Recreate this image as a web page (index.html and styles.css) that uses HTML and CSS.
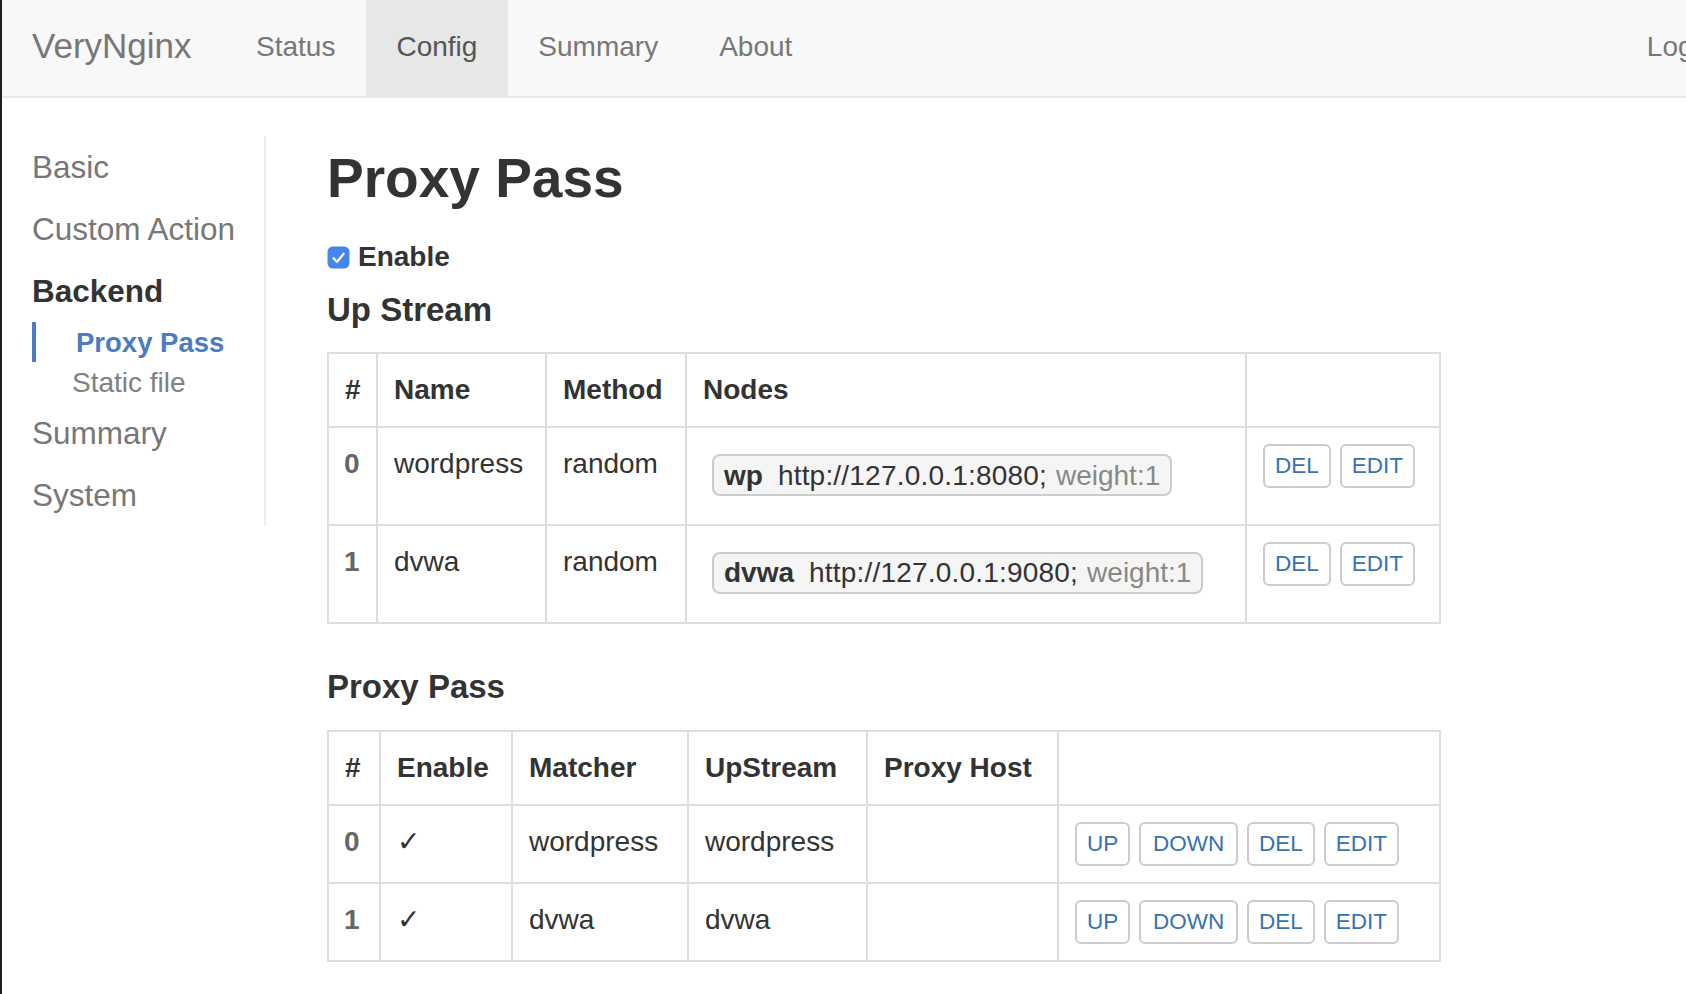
FILE: index.html
```html
<!DOCTYPE html>
<html lang="en">
<head>
<meta charset="utf-8">
<title>VeryNginx - Proxy Pass</title>
<link rel="stylesheet" href="styles.css">
</head>
<body>
<nav class="navbar">
  <a class="brand" href="#">VeryNginx</a>
  <ul class="nav">
    <li><a href="#">Status</a></li>
    <li class="active"><a href="#">Config</a></li>
    <li><a href="#">Summary</a></li>
    <li><a href="#">About</a></li>
  </ul>
  <ul class="nav nav-right">
    <li><a href="#">Logout</a></li>
  </ul>
</nav>
<div class="page">
  <aside class="sidebar">
    <ul class="menu">
      <li class="menu-item">Basic</li>
      <li class="menu-item">Custom Action</li>
      <li class="menu-item current">Backend</li>
      <li>
        <ul class="submenu">
          <li class="sub-item active">Proxy Pass</li>
          <li class="sub-item">Static file</li>
        </ul>
      </li>
      <li class="menu-item">Summary</li>
      <li class="menu-item">System</li>
    </ul>
  </aside>
  <main class="main">
    <h1 class="title">Proxy Pass</h1>
    <label class="enable">
      <span class="checkbox"><svg viewBox="0 0 22 22" width="22" height="22"><rect x="0.5" y="0.5" width="21" height="21" rx="5" fill="#4586ec"/><path d="M6.2 11.6l3.4 3.6L15.9 7.4" fill="none" stroke="#fff" stroke-width="2.1" stroke-linecap="round" stroke-linejoin="round"/></svg></span>
      Enable
    </label>
    <h3 class="section">Up Stream</h3>
    <table class="grid grid-upstream">
      <thead>
        <tr>
          <th class="u1">#</th>
          <th class="u2">Name</th>
          <th class="u3">Method</th>
          <th class="u4">Nodes</th>
          <th class="u5"></th>
        </tr>
      </thead>
      <tbody>
        <tr>
          <th class="num">0</th>
          <td>wordpress</td>
          <td>random</td>
          <td><span class="node"><b class="node-name">wp</b><span class="node-url">http://127.0.0.1:8080;</span><span class="weight">weight:1</span></span></td>
          <td><div class="btns"><span class="btn">DEL</span><span class="btn">EDIT</span></div></td>
        </tr>
        <tr>
          <th class="num">1</th>
          <td>dvwa</td>
          <td>random</td>
          <td><span class="node"><b class="node-name">dvwa</b><span class="node-url">http://127.0.0.1:9080;</span><span class="weight">weight:1</span></span></td>
          <td><div class="btns"><span class="btn">DEL</span><span class="btn">EDIT</span></div></td>
        </tr>
      </tbody>
    </table>
    <h3 class="section section-2">Proxy Pass</h3>
    <table class="grid grid-proxy">
      <thead>
        <tr>
          <th class="p1">#</th>
          <th class="p2">Enable</th>
          <th class="p3">Matcher</th>
          <th class="p4">UpStream</th>
          <th class="p5">Proxy Host</th>
          <th class="p6"></th>
        </tr>
      </thead>
      <tbody>
        <tr>
          <th class="num">0</th>
          <td><span class="tick">&#10003;</span></td>
          <td>wordpress</td>
          <td>wordpress</td>
          <td></td>
          <td><div class="btns"><span class="btn">UP</span><span class="btn btn-wide">DOWN</span><span class="btn">DEL</span><span class="btn">EDIT</span></div></td>
        </tr>
        <tr>
          <th class="num">1</th>
          <td><span class="tick">&#10003;</span></td>
          <td>dvwa</td>
          <td>dvwa</td>
          <td></td>
          <td><div class="btns"><span class="btn">UP</span><span class="btn btn-wide">DOWN</span><span class="btn">DEL</span><span class="btn">EDIT</span></div></td>
        </tr>
      </tbody>
    </table>
  </main>
</div>
</body>
</html>
```

FILE: styles.css
```css
* {
  box-sizing: border-box;
}

html {
  overflow: hidden;
}

body {
  margin: 0;
  height: 100vh;
  overflow: hidden;
  font-family: "Liberation Sans", Arial, Helvetica, sans-serif;
  color: #333;
  background: #fff;
  border-left: 2px solid #1e1e1e;
}

/* ---------- navbar ---------- */
.navbar {
  display: flex;
  height: 98px;
  background: #f8f8f8;
  border-bottom: 2px solid #e7e7e7;
}

.brand {
  display: block;
  padding: 26px 34px 0 30px;
  font-size: 35px;
  line-height: 40px;
  color: #777;
  text-decoration: none;
  white-space: nowrap;
}

.nav {
  display: flex;
  list-style: none;
  margin: 0;
  padding: 0;
}

.nav a {
  display: block;
  height: 96px;
  padding: 27px 30.5px 0;
  font-size: 28px;
  line-height: 40px;
  color: #777;
  text-decoration: none;
  white-space: nowrap;
}

.nav .active a {
  background: #e7e7e7;
  color: #555;
}

.nav-right {
  margin-left: auto;
  margin-right: -77px;
}

/* ---------- layout ---------- */
.page {
  display: flex;
  align-items: flex-start;
}

.sidebar {
  flex: none;
  width: 264px;
  margin-top: 38px;
  padding-left: 30px;
  border-right: 2px solid #eee;
}

.menu,
.submenu {
  list-style: none;
  margin: 0;
  padding: 0;
}

.menu-item {
  font-size: 31.5px;
  line-height: 62px;
  color: #777;
  white-space: nowrap;
}

.menu-item.current {
  font-weight: bold;
  color: #333;
}

.sub-item {
  padding-left: 40px;
  font-size: 28px;
  line-height: 40px;
  padding-top: 1px;
  height: 40px;
  color: #808080;
  white-space: nowrap;
}

.sub-item.active {
  border-left: 4px solid #4a7bc4;
  color: #4a7bc4;
  font-weight: bold;
  font-size: 27.5px;
}

.main {
  flex: none;
  width: 1114px;
  margin-left: 61px;
}

.title {
  margin: 46.7px 0 0;
  font-size: 55px;
  line-height: 66px;
  font-weight: bold;
}

.enable {
  display: flex;
  align-items: center;
  gap: 8px;
  margin-top: 26px;
  font-size: 28px;
  line-height: 40px;
  font-weight: bold;
}

.checkbox svg {
  display: block;
  width: 23px;
  height: 23px;
  margin-top: 2px;
}

.section {
  margin: 13px 0 0;
  font-size: 33px;
  line-height: 40px;
  font-weight: bold;
}

.section-2 {
  margin-top: 43.4px;
}

/* ---------- tables ---------- */
.grid {
  width: 1114px;
  margin-top: 22.6px;
  table-layout: fixed;
  border-collapse: separate;
  border-spacing: 0;
  border-top: 2px solid #ddd;
  border-left: 2px solid #ddd;
  font-size: 28px;
}

.grid-proxy {
  margin-top: 22.9px;
}

.grid th,
.grid td {
  padding: 16px;
  line-height: 40px;
  text-align: left;
  vertical-align: top;
  border-right: 2px solid #ddd;
  border-bottom: 2px solid #ddd;
  white-space: nowrap;
}

.grid thead th {
  font-weight: bold;
  color: #333;
  vertical-align: bottom;
}

.grid .num {
  font-weight: bold;
  color: #666;
  padding-left: 15px;
}

.u1 { width: 49px; }
.u2 { width: 169px; }
.u3 { width: 140px; }
.u4 { width: 560px; }
.u5 { width: 194px; }

.p1 { width: 52px; }
.p2 { width: 132px; }
.p3 { width: 176px; }
.p4 { width: 179px; }
.p5 { width: 191px; }
.p6 { width: 382px; }

.node {
  display: flex;
  align-items: center;
  width: fit-content;
  height: 42px;
  margin: 10px 0 11.7px 9px;
  padding: 1px 10px 0;
  border: 2px solid #ccc;
  border-radius: 8px;
  background: #f5f5f5;
  line-height: 38px;
  color: #333;
}

.node-name {
  margin-right: 15px;
}

.node-url {
  letter-spacing: 0.2px;
}

.weight {
  margin-left: 9px;
  color: #888;
}

.btns {
  display: flex;
  gap: 9px;
}

.btn {
  display: block;
  padding: 2px 10px;
  border: 2px solid #ccc;
  border-radius: 6px;
  background: #fff;
  font-size: 22.5px;
  line-height: 36px;
  color: #3872b0;
}

.btn-wide {
  padding-left: 11.7px;
  padding-right: 11.7px;
}

.tick {
  font-family: "DejaVu Sans", sans-serif;
  font-size: 28px;
  font-weight: bold;
  color: #333;
}
```
